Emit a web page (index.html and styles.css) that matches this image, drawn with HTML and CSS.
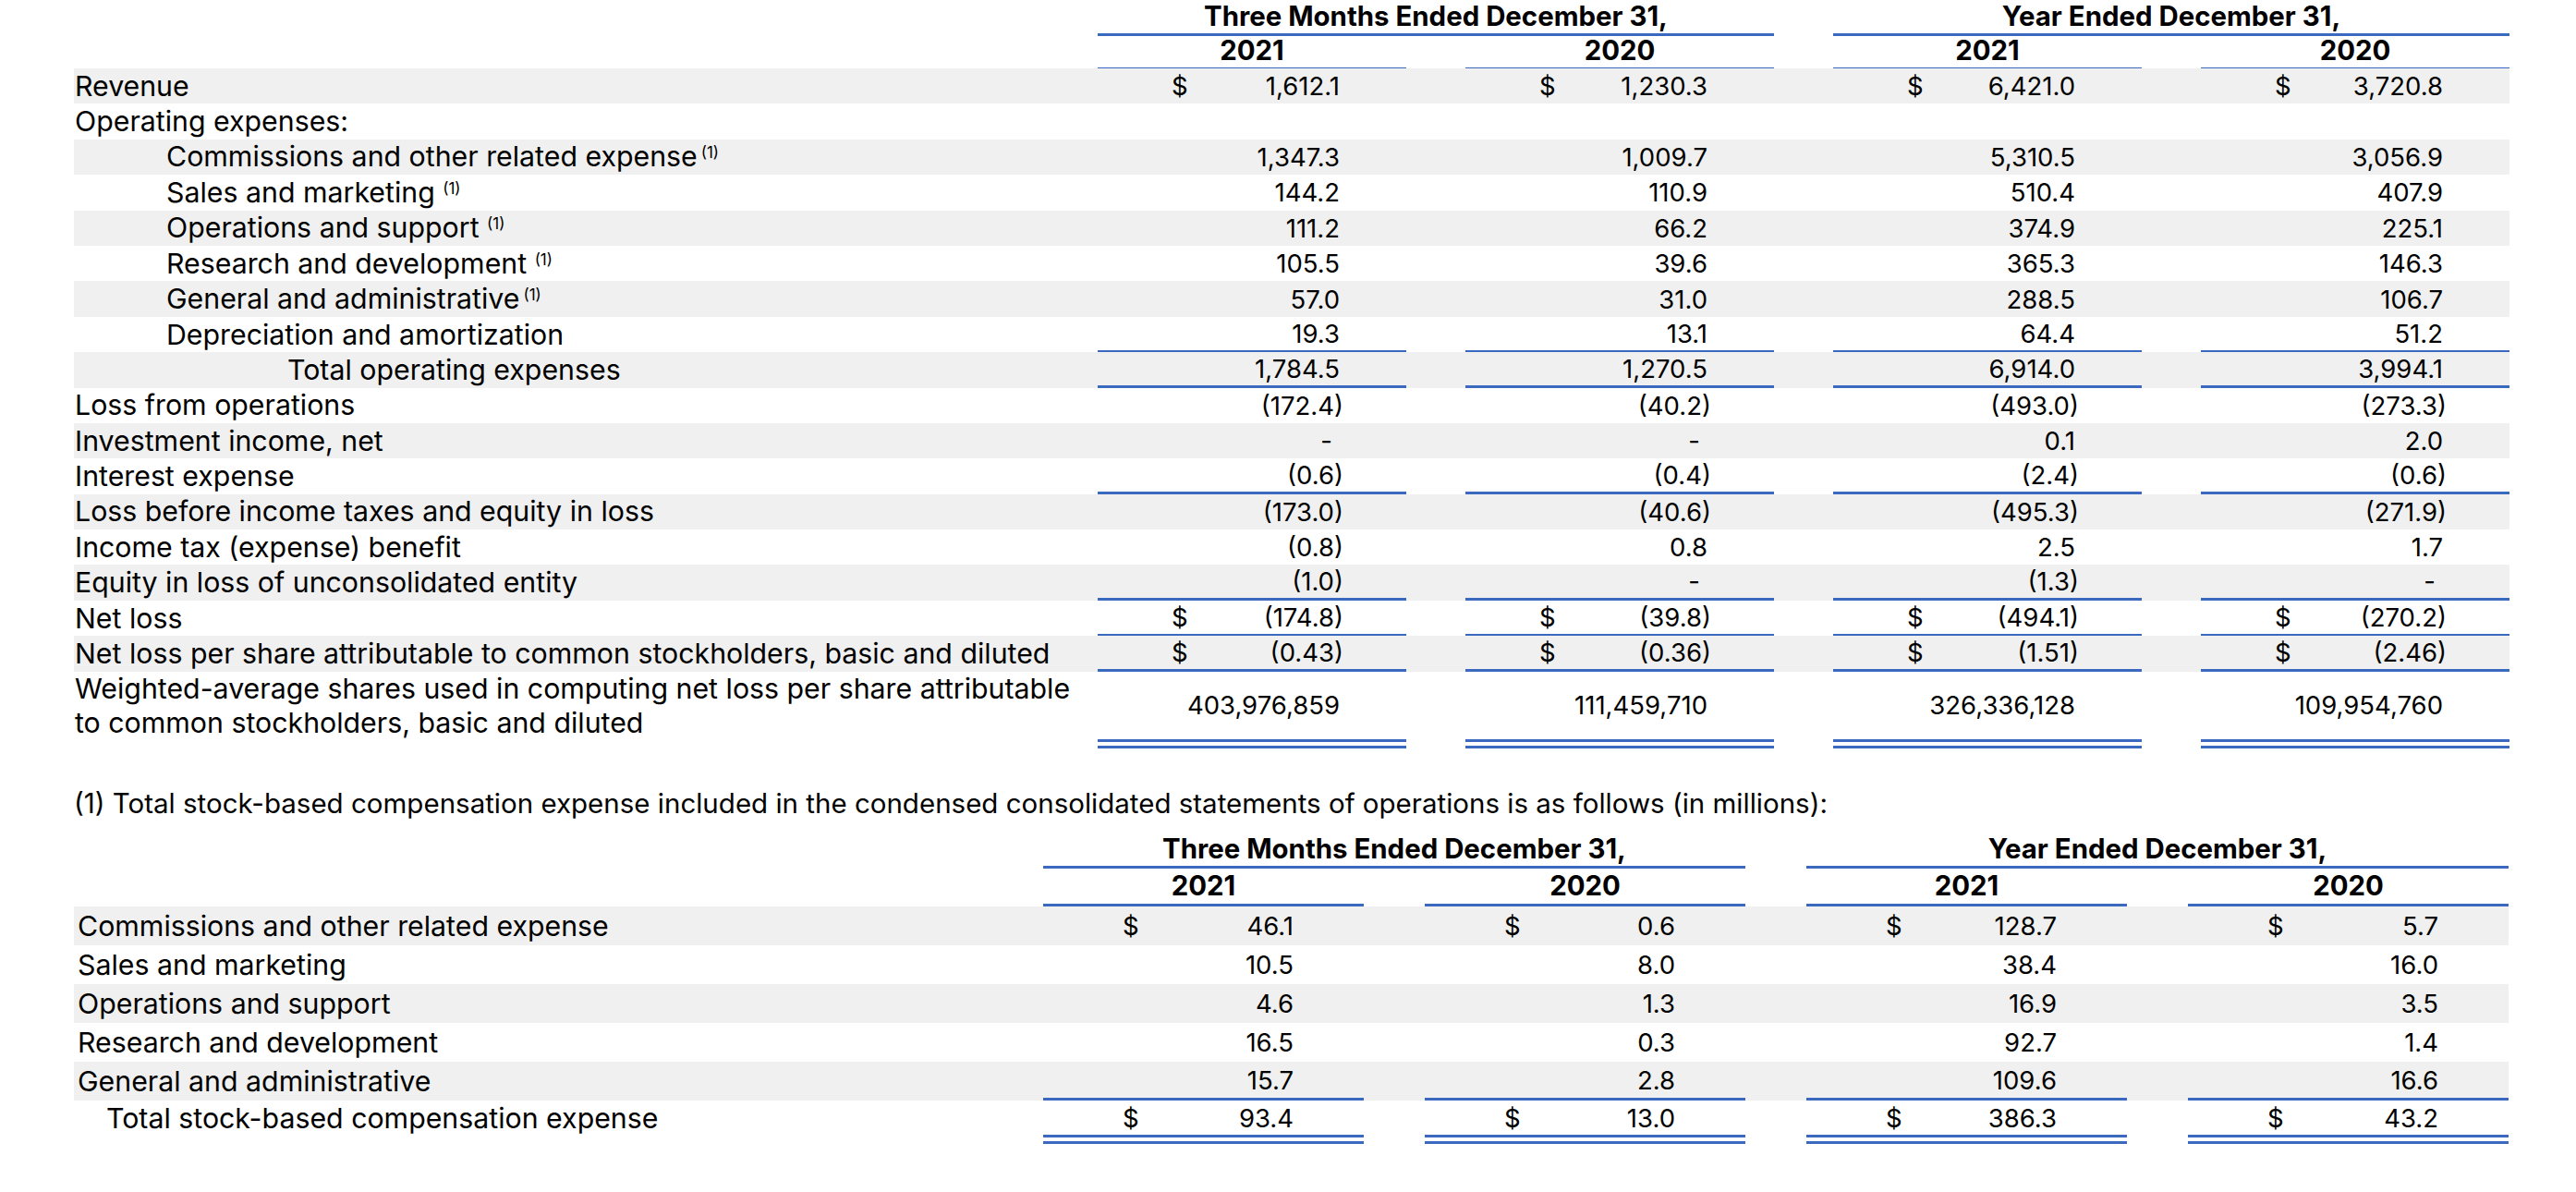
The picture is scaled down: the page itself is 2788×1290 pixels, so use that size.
FILE: index.html
```html
<!DOCTYPE html>
<html>
<head>
<meta charset="utf-8">
<title>Condensed Consolidated Statements of Operations</title>
<link rel="stylesheet" href="styles.css">
</head>
<body>
<div class="page">

  <div class="tbl t1">
    <div class="r h1">
      <div></div>
      <div class="hd span3">Three Months Ended December 31,</div>
      <div></div>
      <div class="hd span3">Year Ended December 31,</div>
    </div>
    <div class="r h2">
      <div></div>
      <div class="yr">2021</div><div></div>
      <div class="yr">2020</div><div></div>
      <div class="yr">2021</div><div></div>
      <div class="yr">2020</div>
    </div>

    <div class="r g">
      <div class="lb"><span>Revenue</span></div>
      <div class="n"><span>$</span><span class="v">1,612.1</span></div><div></div>
      <div class="n"><span>$</span><span class="v">1,230.3</span></div><div></div>
      <div class="n"><span>$</span><span class="v">6,421.0</span></div><div></div>
      <div class="n"><span>$</span><span class="v">3,720.8</span></div>
    </div>
    <div class="r">
      <div class="lb"><span>Operating expenses:</span></div>
      <div class="n"></div><div></div><div class="n"></div><div></div><div class="n"></div><div></div><div class="n"></div>
    </div>
    <div class="r g">
      <div class="lb sub"><span>Commissions and other related expense<span class="fn tight">(1)</span></span></div>
      <div class="n"><span class="v">1,347.3</span></div><div></div>
      <div class="n"><span class="v">1,009.7</span></div><div></div>
      <div class="n"><span class="v">5,310.5</span></div><div></div>
      <div class="n"><span class="v">3,056.9</span></div>
    </div>
    <div class="r">
      <div class="lb sub"><span>Sales and marketing <span class="fn">(1)</span></span></div>
      <div class="n"><span class="v">144.2</span></div><div></div>
      <div class="n"><span class="v">110.9</span></div><div></div>
      <div class="n"><span class="v">510.4</span></div><div></div>
      <div class="n"><span class="v">407.9</span></div>
    </div>
    <div class="r g">
      <div class="lb sub"><span>Operations and support <span class="fn">(1)</span></span></div>
      <div class="n"><span class="v">111.2</span></div><div></div>
      <div class="n"><span class="v">66.2</span></div><div></div>
      <div class="n"><span class="v">374.9</span></div><div></div>
      <div class="n"><span class="v">225.1</span></div>
    </div>
    <div class="r">
      <div class="lb sub"><span>Research and development <span class="fn">(1)</span></span></div>
      <div class="n"><span class="v">105.5</span></div><div></div>
      <div class="n"><span class="v">39.6</span></div><div></div>
      <div class="n"><span class="v">365.3</span></div><div></div>
      <div class="n"><span class="v">146.3</span></div>
    </div>
    <div class="r g">
      <div class="lb sub"><span>General and administrative<span class="fn tight">(1)</span></span></div>
      <div class="n"><span class="v">57.0</span></div><div></div>
      <div class="n"><span class="v">31.0</span></div><div></div>
      <div class="n"><span class="v">288.5</span></div><div></div>
      <div class="n"><span class="v">106.7</span></div>
    </div>
    <div class="r ul">
      <div class="lb sub"><span>Depreciation and amortization</span></div>
      <div class="n"><span class="v">19.3</span></div><div></div>
      <div class="n"><span class="v">13.1</span></div><div></div>
      <div class="n"><span class="v">64.4</span></div><div></div>
      <div class="n"><span class="v">51.2</span></div>
    </div>
    <div class="r g ul">
      <div class="lb tot"><span>Total operating expenses</span></div>
      <div class="n"><span class="v">1,784.5</span></div><div></div>
      <div class="n"><span class="v">1,270.5</span></div><div></div>
      <div class="n"><span class="v">6,914.0</span></div><div></div>
      <div class="n"><span class="v">3,994.1</span></div>
    </div>
    <div class="r">
      <div class="lb"><span>Loss from operations</span></div>
      <div class="n"><span class="v neg">(172.4)</span></div><div></div>
      <div class="n"><span class="v neg">(40.2)</span></div><div></div>
      <div class="n"><span class="v neg">(493.0)</span></div><div></div>
      <div class="n"><span class="v neg">(273.3)</span></div>
    </div>
    <div class="r g">
      <div class="lb"><span>Investment income, net</span></div>
      <div class="n"><span class="v dash">-</span></div><div></div>
      <div class="n"><span class="v dash">-</span></div><div></div>
      <div class="n"><span class="v">0.1</span></div><div></div>
      <div class="n"><span class="v">2.0</span></div>
    </div>
    <div class="r ul">
      <div class="lb"><span>Interest expense</span></div>
      <div class="n"><span class="v neg">(0.6)</span></div><div></div>
      <div class="n"><span class="v neg">(0.4)</span></div><div></div>
      <div class="n"><span class="v neg">(2.4)</span></div><div></div>
      <div class="n"><span class="v neg">(0.6)</span></div>
    </div>
    <div class="r g">
      <div class="lb"><span>Loss before income taxes and equity in loss</span></div>
      <div class="n"><span class="v neg">(173.0)</span></div><div></div>
      <div class="n"><span class="v neg">(40.6)</span></div><div></div>
      <div class="n"><span class="v neg">(495.3)</span></div><div></div>
      <div class="n"><span class="v neg">(271.9)</span></div>
    </div>
    <div class="r">
      <div class="lb"><span>Income tax (expense) benefit</span></div>
      <div class="n"><span class="v neg">(0.8)</span></div><div></div>
      <div class="n"><span class="v">0.8</span></div><div></div>
      <div class="n"><span class="v">2.5</span></div><div></div>
      <div class="n"><span class="v">1.7</span></div>
    </div>
    <div class="r g ul">
      <div class="lb"><span>Equity in loss of unconsolidated entity</span></div>
      <div class="n"><span class="v neg">(1.0)</span></div><div></div>
      <div class="n"><span class="v dash">-</span></div><div></div>
      <div class="n"><span class="v neg">(1.3)</span></div><div></div>
      <div class="n"><span class="v dash">-</span></div>
    </div>
    <div class="r ul">
      <div class="lb"><span>Net loss</span></div>
      <div class="n"><span>$</span><span class="v neg">(174.8)</span></div><div></div>
      <div class="n"><span>$</span><span class="v neg">(39.8)</span></div><div></div>
      <div class="n"><span>$</span><span class="v neg">(494.1)</span></div><div></div>
      <div class="n"><span>$</span><span class="v neg">(270.2)</span></div>
    </div>
    <div class="r g ul">
      <div class="lb"><span>Net loss per share attributable to common stockholders, basic and diluted</span></div>
      <div class="n"><span>$</span><span class="v neg">(0.43)</span></div><div></div>
      <div class="n"><span>$</span><span class="v neg">(0.36)</span></div><div></div>
      <div class="n"><span>$</span><span class="v neg">(1.51)</span></div><div></div>
      <div class="n"><span>$</span><span class="v neg">(2.46)</span></div>
    </div>
    <div class="r tall dbl">
      <div class="lb"><span>Weighted-average shares used in computing net loss per share attributable<br>to common stockholders, basic and diluted</span></div>
      <div class="n"><span class="v">403,976,859</span></div><div></div>
      <div class="n"><span class="v">111,459,710</span></div><div></div>
      <div class="n"><span class="v">326,336,128</span></div><div></div>
      <div class="n"><span class="v">109,954,760</span></div>
    </div>
  </div>

  <p class="note">(1) Total stock-based compensation expense included in the condensed consolidated statements of operations is as follows (in millions):</p>

  <div class="tbl t2">
    <div class="r h1">
      <div></div>
      <div class="hd span3">Three Months Ended December 31,</div>
      <div></div>
      <div class="hd span3">Year Ended December 31,</div>
    </div>
    <div class="r h2">
      <div></div>
      <div class="yr">2021</div><div></div>
      <div class="yr">2020</div><div></div>
      <div class="yr">2021</div><div></div>
      <div class="yr">2020</div>
    </div>
    <div class="r g">
      <div class="lb"><span>Commissions and other related expense</span></div>
      <div class="n"><span>$</span><span class="v">46.1</span></div><div></div>
      <div class="n"><span>$</span><span class="v">0.6</span></div><div></div>
      <div class="n"><span>$</span><span class="v">128.7</span></div><div></div>
      <div class="n"><span>$</span><span class="v">5.7</span></div>
    </div>
    <div class="r">
      <div class="lb"><span>Sales and marketing</span></div>
      <div class="n"><span class="v">10.5</span></div><div></div>
      <div class="n"><span class="v">8.0</span></div><div></div>
      <div class="n"><span class="v">38.4</span></div><div></div>
      <div class="n"><span class="v">16.0</span></div>
    </div>
    <div class="r g">
      <div class="lb"><span>Operations and support</span></div>
      <div class="n"><span class="v">4.6</span></div><div></div>
      <div class="n"><span class="v">1.3</span></div><div></div>
      <div class="n"><span class="v">16.9</span></div><div></div>
      <div class="n"><span class="v">3.5</span></div>
    </div>
    <div class="r">
      <div class="lb"><span>Research and development</span></div>
      <div class="n"><span class="v">16.5</span></div><div></div>
      <div class="n"><span class="v">0.3</span></div><div></div>
      <div class="n"><span class="v">92.7</span></div><div></div>
      <div class="n"><span class="v">1.4</span></div>
    </div>
    <div class="r g ul">
      <div class="lb"><span>General and administrative</span></div>
      <div class="n"><span class="v">15.7</span></div><div></div>
      <div class="n"><span class="v">2.8</span></div><div></div>
      <div class="n"><span class="v">109.6</span></div><div></div>
      <div class="n"><span class="v">16.6</span></div>
    </div>
    <div class="r total dbl">
      <div class="lb tot"><span>Total stock-based compensation expense</span></div>
      <div class="n"><span>$</span><span class="v">93.4</span></div><div></div>
      <div class="n"><span>$</span><span class="v">13.0</span></div><div></div>
      <div class="n"><span>$</span><span class="v">386.3</span></div><div></div>
      <div class="n"><span>$</span><span class="v">43.2</span></div>
    </div>
  </div>

</div>
</body>
</html>
```
FILE: styles.css
```css
html, body {
  margin: 0;
  padding: 0;
  background: #ffffff;
  color: #000000;
  font-family: "Inter", "Liberation Sans", sans-serif;
}

.page {
  padding-left: 80px;
}

.tbl {
  display: flex;
  flex-direction: column;
}

.t1 {
  width: 2636px;
}

.t2 {
  width: 2635px;
}

.r {
  display: grid;
  box-sizing: border-box;
}

.t1 .r {
  grid-template-columns: 1108px 334px 64px 334px 64px 334px 64px 334px;
  height: 38.4px;
}

.t2 .r {
  grid-template-columns: 1049px 347px 66px 347px 66px 347px 66px 347px;
  height: 42px;
}

.r > div {
  box-sizing: border-box;
}

.g {
  background: #f0f0f0;
}

/* header rows */
.hd, .yr {
  display: flex;
  align-items: center;
  justify-content: center;
  font-weight: 700;
  font-size: 29.4px;
  line-height: 36px;
  border-bottom: 3px solid #3a69bf;
}

.span3 {
  grid-column: span 3;
}

.t1 .r.h1 { height: 37px; }
.t1 .r.h2 { height: 37px; }

.t2 .r.h1 { height: 53px; }
.t2 .r.h1 .hd { align-items: flex-end; }
.t2 .r.h2 { height: 41.5px; }

/* label column */
.lb {
  display: flex;
  align-items: center;
  font-size: 30.3px;
  line-height: 37px;
  white-space: nowrap;
  padding-left: 1px;
}

.t2 .lb {
  padding-left: 4px;
}

.t1 .lb.sub {
  padding-left: 100px;
}

.t1 .lb.tot {
  padding-left: 231px;
}

.t2 .lb.tot {
  padding-left: 35px;
}

.fn {
  font-size: 17px;
  vertical-align: 9px;
  line-height: 1;
}

.fn.tight {
  margin-left: 4px;
}

/* numeric cells */
.n {
  display: flex;
  align-items: center;
  font-size: 27.5px;
  line-height: 36px;
  padding: 0 72px 0 80px;
}

.t2 .n {
  padding: 0 76px 0 86px;
}

.n .v {
  margin-left: auto;
}

.n .v.neg {
  margin-right: -4px;
}

.n .v.dash {
  margin-right: 8px;
}

.ul .n {
  border-bottom: 3px solid #3a69bf;
}

.dbl .n {
  border-bottom: 10px double #3a69bf;
}

.t1 .r.tall {
  height: 83px;
}

.t1 .r.tall .lb {
  white-space: normal;
  padding-bottom: 8px;
}

.t2 .r.total {
  height: 47px;
}

.t2 .r.total .lb {
  padding-bottom: 8px;
}

.note {
  margin: 41px 0 0 0;
  font-size: 29.5px;
  line-height: 36px;
  white-space: nowrap;
}
```
